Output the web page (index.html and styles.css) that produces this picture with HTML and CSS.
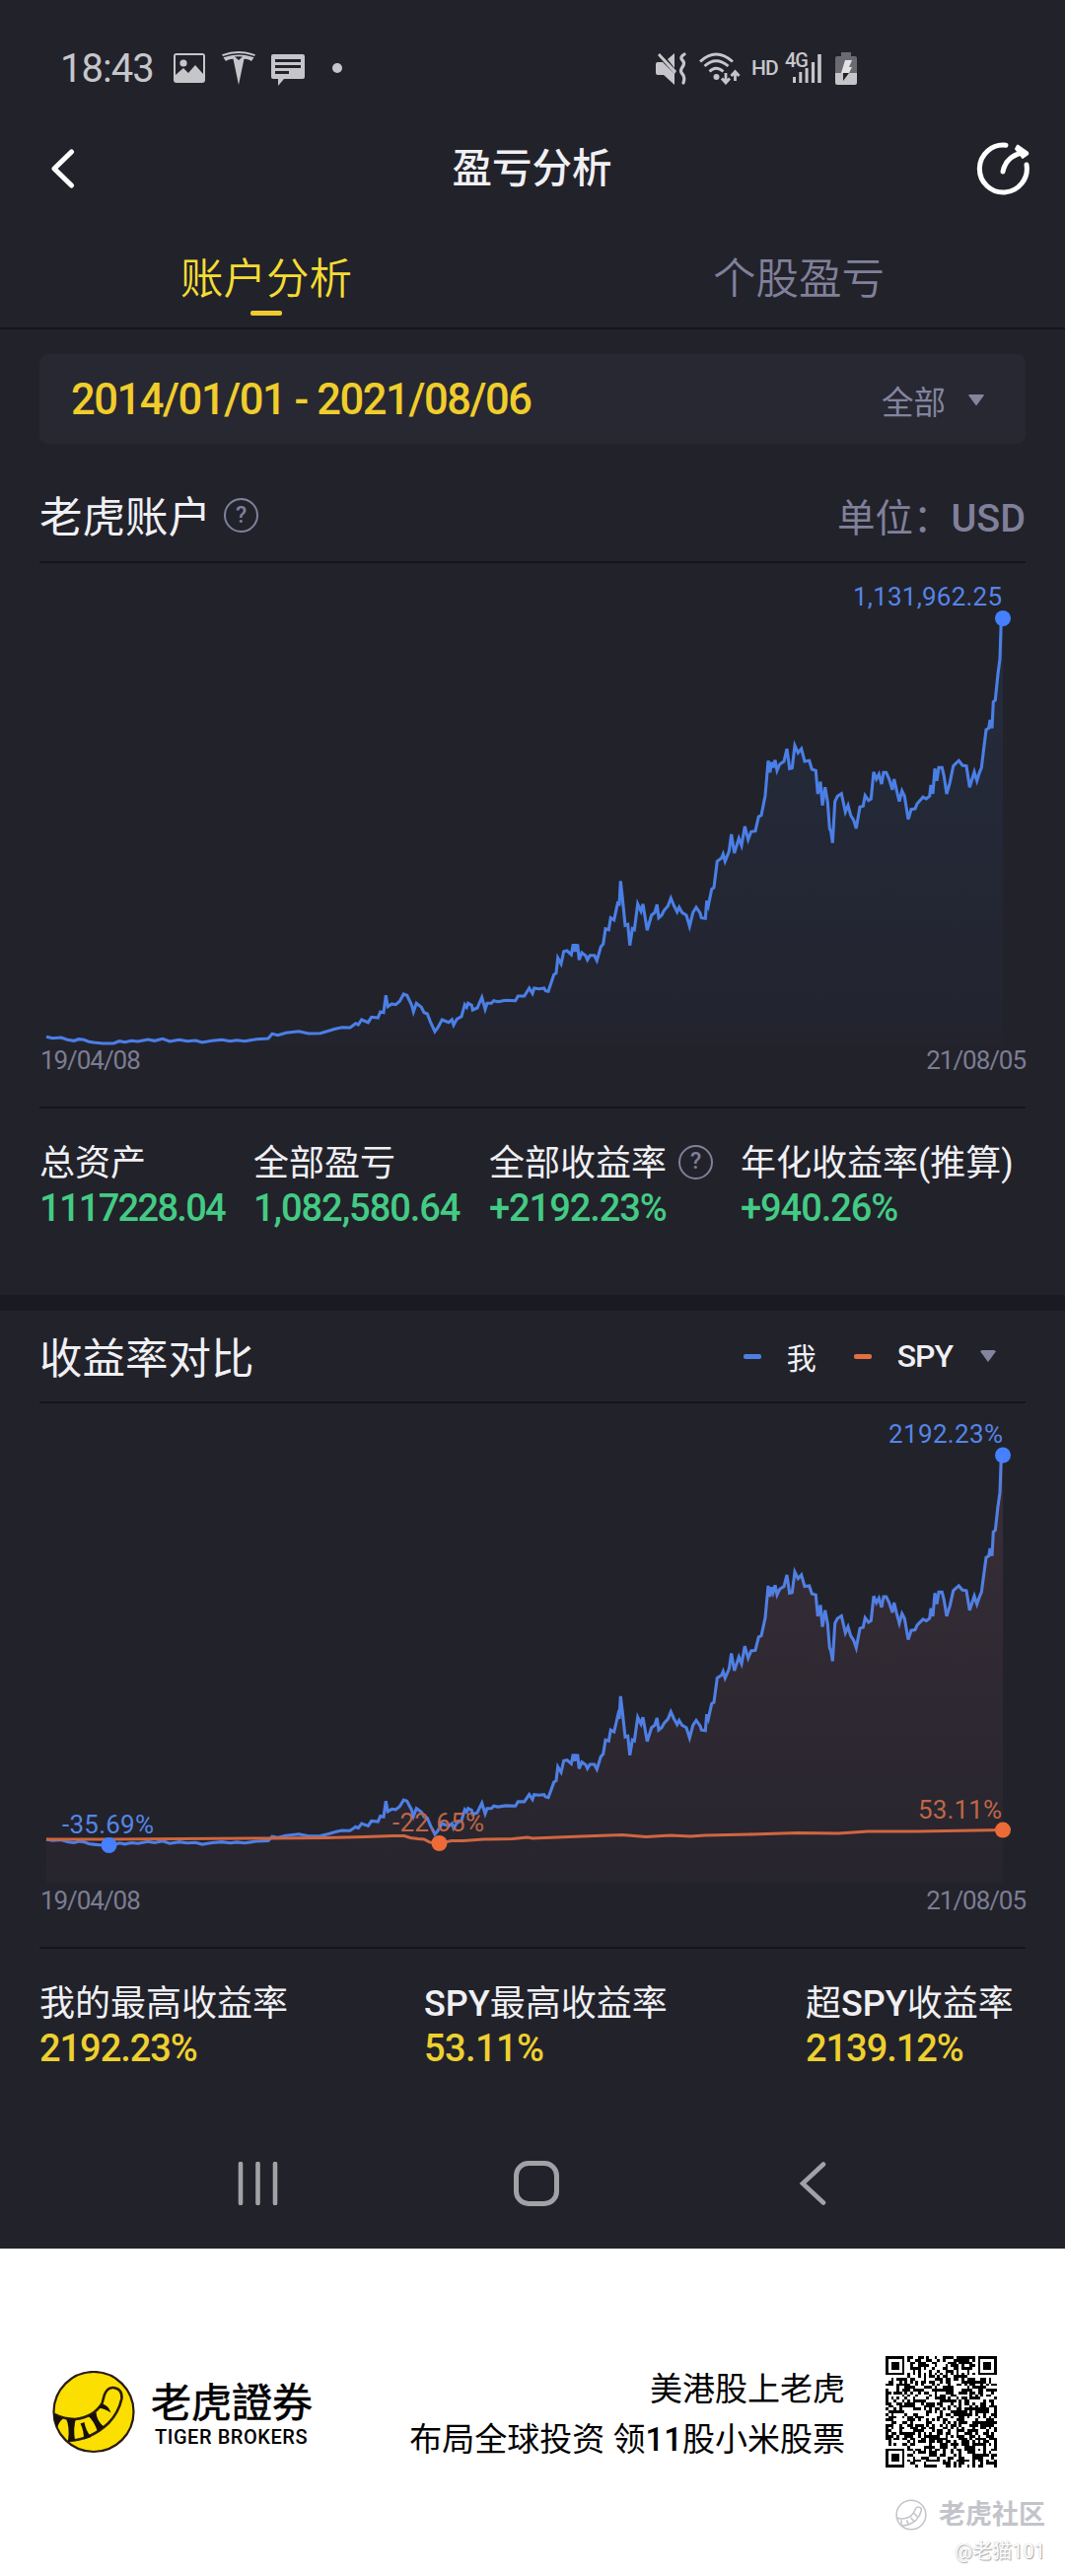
FILE: index.html
```html
<!DOCTYPE html>
<html lang="zh-CN">
<head>
<meta charset="utf-8">
<title>盈亏分析</title>
<link rel="stylesheet" href="styles.css">
</head>
<body>
<main class="app">
  <div class="status">
    <span class="clock">18:43</span>
    <svg class="ic-photo" width="32" height="30" viewBox="0 0 32 30"><path fill-rule="evenodd" d="M3 0h26q3 0 3 3v24q0 3-3 3H3q-3 0-3-3V3q0-3 3-3zM2 2v20l8-7 5 5 7-8 8 9V2z"/><circle cx="10" cy="10" r="3.6"/></svg>
    <svg class="ic-tesla" width="34" height="34" viewBox="0 0 34 34"><path d="M0 3.2Q17-3 34 3.2L33 5Q17-.8 1 5zM1.5 6.3Q17 .5 32.5 6.3L30 10q-2-2-7.500-2.300L17 34 11.500 7.700Q6 8 4 10zM13 5.600l4 3.400 4-3.400q-4-.6-8 0z" fill-rule="evenodd"/></svg>
    <svg class="ic-msg" width="34" height="32" viewBox="0 0 34 32"><path fill-rule="evenodd" d="M2 0h30q2 0 2 2v21q0 2-2 2H13l-6 7V25H2q-2 0-2-2V2q0-2 2-2zM4 5v3h26V5zM4 11v3h26v-3zM4 17v3h14v-3z"/></svg>
    <span class="more-dot"></span>
    <svg class="ic-mute" width="32" height="33" viewBox="0 0 32 33"><path d="M2 10h5L19 22v11L8 23H2q-2 0-2-2v-9q0-2 2-2zM12 7l7-6v15zM2 3l2-2 17 18-2 3z"/><path d="M29 2q-5 3-2 6t0 7 0 7 1 9" fill="none" stroke="#c6c6ca" stroke-width="3.200" stroke-linecap="round"/></svg>
    <svg class="ic-wifi" width="42" height="33" viewBox="0 0 42 33"><g fill="none" stroke="#c6c6ca" stroke-width="2.800"><path d="M1 9.500Q17-5.500 34 9.500M5.500 14Q17 3.500 29.500 14M10.500 19.500q6.500-6.500 14 0"/><path d="M27 21v9M23 26.500l4 4.500 4-4.500M36.500 29v-9M32.500 24l4-4.500 4 4.500"/></g><circle cx="17.500" cy="25" r="3"/></svg>
    <span class="hd">HD</span>
    <span class="net"><span class="gen">4G</span><svg class="bars" width="29" height="29" viewBox="0 0 29 29"><path d="M0 23h3v6H0zM6.300 18h3v11h-3zM12.600 14h3v15h-3zM18.900 8h3.200v21h-3.200zM25.200 0h3.600v29h-3.600z"/></svg></span>
    <svg class="ic-bat" width="22" height="33" viewBox="0 0 22 33"><path d="M6 0h10v4h4q2 0 2 2v15H0V6q0-2 2-2h4z" fill="#6a6a70"/><path d="M0 21h22v10q0 2-2 2H2q-2 0-2-2z"/><path d="M10 8h7l-3 7h3l-3 6H6z" fill="#e2e2e4"/><path d="M8 21h6L8 29z" fill="#22222b"/></svg>
  </div>

  <header class="header">
    <svg class="back" width="28" height="44" viewBox="0 0 28 44"><path d="M22.500 5 5 22l17.500 17" fill="none" stroke="#fff" stroke-width="5.200" stroke-linecap="round" stroke-linejoin="round"/></svg>
    <h1>盈亏分析</h1>
    <svg class="share" width="56" height="56" viewBox="0 0 56 56"><g fill="none" stroke="#fff" stroke-width="5" stroke-linecap="round" stroke-linejoin="round"><path d="M31 4.200A24 24 0 1 0 52 24"/><path d="M28 31q3-15 19-19"/></g><path d="M43 4.500 53 11.500q.8 1 0 2l-5 3.500-7-9z" fill="#fff" stroke="#fff" stroke-width="2" stroke-linejoin="round"/></svg>
  </header>

  <nav class="tabs">
    <span class="tab active">账户分析</span>
    <span class="tab">个股盈亏</span>
  </nav>

  <section class="panel account">
    <div class="range">
      <span class="range-dates">2014/01/01 - 2021/08/06</span>
      <span class="range-all">全部</span>
      <i class="caret"></i>
    </div>
    <div class="title-row">
      <h2>老虎账户</h2>
      <span class="help">?</span>
      <span class="unit">单位：<b>USD</b></span>
    </div>
    <svg class="chart" id="assets" width="1080" height="489" viewBox="0 571 1080 489">
      <defs><linearGradient id="blueFill" gradientUnits="userSpaceOnUse" x1="0" y1="627" x2="0" y2="1059"><stop offset="0" stop-color="#3a80d8" stop-opacity=".11"/><stop offset="1" stop-color="#3a80d8" stop-opacity=".015"/></linearGradient></defs>
      <path class="line-blue" data-line></path>
      <path fill="url(#blueFill)" data-area></path>
      <circle class="dot-blue" cx="1017" cy="627" r="8"/>
      <text class="t-blue" x="865" y="614" textLength="151">1,131,962.25</text>
    </svg>
    <div class="axis"><span>19/04/08</span><span>21/08/05</span></div>
    <div class="stats">
      <div class="stat s1"><span class="label">总资产</span><span class="value">1117228.04</span></div>
      <div class="stat s2"><span class="label">全部盈亏</span><span class="value">1,082,580.64</span></div>
      <div class="stat s3"><span class="label">全部收益率<span class="help">?</span></span><span class="value">+2192.23%</span></div>
      <div class="stat s4"><span class="label">年化收益率(推算)</span><span class="value">+940.26%</span></div>
    </div>
  </section>

  <section class="panel compare">
    <div class="title-row">
      <h2>收益率对比</h2>
      <div class="legend">
        <i class="dash blue"></i><span class="me">我</span>
        <i class="dash orange"></i><span class="spy">SPY</span>
        <i class="caret"></i>
      </div>
    </div>
    <svg class="chart" id="returns" width="1080" height="488" viewBox="0 1423 1080 488">
      <defs><linearGradient id="warmFill" gradientUnits="userSpaceOnUse" x1="0" y1="1475" x2="0" y2="1910"><stop offset="0" stop-color="#d8828e" stop-opacity=".125"/><stop offset="1" stop-color="#d8828e" stop-opacity=".025"/></linearGradient></defs>
      <path class="line-blue" data-line></path>
      <path class="line-orange" d="M47 1865H110L273 1864 330 1863.500 370 1862.500 398 1861.500 410 1861.500 416 1863.500 424 1864.500 430 1865 436 1868 445 1869 458 1866.500 470 1866.500 490 1865 520 1864.500 535 1863 540 1864 590 1862 631 1860.500 655 1862.500 680 1861 700 1862 715 1861 760 1860 808 1858.500 850 1859 880 1857 930 1857 1017 1855.600"/>
      <circle class="dot-blue" cx="110.500" cy="1871" r="8"/>
      <circle class="dot-orange" cx="445.500" cy="1869" r="8"/>
      <circle class="dot-blue" cx="1017" cy="1475.500" r="8"/>
      <circle class="dot-orange" cx="1017" cy="1855.600" r="8"/>
      <path fill="url(#warmFill)" data-area></path>
      <text class="t-blue" x="901" y="1463" textLength="116">2192.23%</text>
      <text class="t-blue" x="63" y="1858.500" textLength="93">-35.69%</text>
      <text class="t-orange" x="398" y="1856.500" textLength="93">-22.65%</text>
      <text class="t-orange" x="931" y="1843.500" textLength="85">53.11%</text>
    </svg>
    <div class="axis"><span>19/04/08</span><span>21/08/05</span></div>
    <div class="stats gold">
      <div class="stat g1"><span class="label">我的最高收益率</span><span class="value">2192.23%</span></div>
      <div class="stat g2"><span class="label"><b>SPY</b>最高收益率</span><span class="value">53.11%</span></div>
      <div class="stat g3"><span class="label">超<b>SPY</b>收益率</span><span class="value">2139.12%</span></div>
    </div>
  </section>

  <div class="navbar">
    <svg width="42" height="44" viewBox="0 0 42 44"><path d="M3 2v40M20.500 2v40M38 2v40" stroke="#a2a2a6" stroke-width="4.600" stroke-linecap="round"/></svg>
    <svg class="home" width="48" height="48" viewBox="0 0 48 48"><rect x="3.500" y="3.500" width="41" height="41" rx="12.500" fill="none" stroke="#a2a2a6" stroke-width="5"/></svg>
    <svg width="28" height="44" viewBox="0 0 28 44"><path d="M25 2.500 4 22l21 19.500" fill="none" stroke="#a2a2a6" stroke-width="4.600" stroke-linecap="round"/></svg>
  </div>
</main>

<footer class="footer">
  <svg class="logo" width="84" height="84" viewBox="0 0 84 84">
    <circle cx="42" cy="41.500" r="40.500" fill="#fbdf00" stroke="#2a1c10" stroke-width="2.200"/>
    <path d="M2 44Q12 49 23 49 42 47 50.500 33L53 24Q56 16.500 62 17 71 18 70.500 28 67 43 57 53 39 70 16 71" fill="none" stroke="#2a1c10" stroke-width="2.600"/>
    <path d="M1.500 44 11 48.500Q7 51 5 58 2 52 1.500 44zM14 48.500h10Q21 58 23 70.500L16 71Q18 57 14 48.500zM28.500 53.500 32.500 52Q34 61 39.500 67L32 69.500Q32 60 28.500 53.500zM36 45.500 44.500 42Q45 51 52.500 56.500L46 61.500Q42 50 36 45.500zM47 37.500 51 33.500Q57 35 59.500 42.500 54 38.500 47 37.500z" fill="#17100a"/>
  </svg>
  <div class="brand"><span class="brand-cn">老虎證券</span><span class="brand-en">TIGER BROKERS</span></div>
  <div class="slogan"><span>美港股上老虎</span><span>布局全球投资 领<b>11</b>股小米股票</span></div>
  <svg class="qr" width="113" height="113" viewBox="0 0 41 41" shape-rendering="crispEdges"><path id="qr-cells"/></svg>
  <div class="watermark">
    <div class="wm-name">
      <svg width="32" height="32" viewBox="0 0 84 84" fill="none" stroke="#c3c4ca" stroke-width="4"><circle cx="42" cy="42" r="39"/><path d="M2 50Q12 53 23 52 42 50 50 34L53 27Q56 20 62 21 70 22 69 31 65 46 55 56 39 70 16 71M16 56v14M30 56l5 12M41 49l8 10M50 38l9 9"/></svg>
      <span>老虎社区</span>
    </div>
    <span class="wm-user">@老猫101</span>
  </div>
</footer>
<script src="app.js"></script>
</body>
</html>
```
FILE: styles.css
```css
* { box-sizing: border-box; }
body {
  margin: 0;
  width: 1080px;
  background: #fff;
  font-family: Roboto, "Noto Sans CJK SC", sans-serif;
  font-variant-ligatures: none;
}
h1, h2 { margin: 0; font-weight: 400; }
b { font-weight: 500; }
span { white-space: nowrap; }
svg { display: block; flex: none; }

.app { height: 2280px; background: #22222b; color: #f0f0f3; }

/* system status bar */
.status { display: flex; align-items: center; height: 138px; padding-left: 61px; color: #c6c6ca; fill: #c6c6ca; }
.clock { font-size: 40px; width: 115px; letter-spacing: -1px; }
.ic-tesla { margin-left: 17px; }
.ic-msg { margin: 3px 0 0 16px; }
.more-dot { width: 10px; height: 10px; border-radius: 50%; background: #c6c6ca; margin-left: 28px; }
.ic-mute { margin-left: 318px; }
.ic-wifi { margin-left: 12px; }
.hd { font-size: 21px; font-weight: 500; margin-left: 11px; width: 34px; letter-spacing: -1px; }
.net { display: block; position: relative; width: 38px; height: 32px; }
.gen { position: absolute; left: 0; top: -2px; font-size: 20px; line-height: 20px; font-weight: 500; letter-spacing: -1px; }
.bars { position: absolute; left: 8px; top: 2px; }
.ic-bat { margin-left: 13px; }

.header { display: flex; align-items: center; justify-content: space-between; height: 66px; padding: 0 35px 0 50px; }
h1 { font-size: 40.500px; font-weight: 500; line-height: 60px; }
.back { margin-right: 12px; }

.tabs { display: flex; height: 130px; border-bottom: 2px solid #15151e; }
.tab { flex: 1; display: flex; flex-direction: column; align-items: center; padding-top: 48px; font-size: 43.500px; line-height: 64px; color: #80809a; font-weight: 350; }
.tab.active { color: #f4dc33; }
.tab.active::after { content: ""; width: 32px; height: 5px; margin-top: -1px; border-radius: 2px; background: #eecb2e; }

.account { padding-top: 25px; height: 979px; }
.range { display: flex; align-items: center; height: 91px; margin: 0 40px; padding: 2px 42px 0 32px; border-radius: 9px; background: #272831; }
.range-dates { font-size: 43.500px; font-weight: 500; color: #f0cd2c; letter-spacing: -1.450px; margin-right: auto; }
.range-all { font-size: 32.500px; color: #8384a0; }
.caret { width: 16px; height: 12px; margin-left: 23px; background: #8384a0; clip-path: polygon(0 10%, 12% 0, 88% 0, 100% 10%, 50% 100%); }

.title-row { display: flex; align-items: center; height: 121px; margin: 0 40px; padding-top: 32px; border-bottom: 2px solid #15151e; }
h2 { font-size: 43.500px; line-height: 60px; }
.help { display: inline-flex; align-items: center; justify-content: center; width: 35px; height: 35px; border: 2.500px solid #80809a; border-radius: 50%; color: #80809a; font-size: 23px; line-height: 30px; font-weight: 500; }
.title-row .help { margin: -6px 0 0 13px; }
.unit { margin: -8px 0 0 auto; font-size: 38.500px; color: #80809a; }
.unit b { font-size: 39.500px; }

.chart { font-family: Roboto, sans-serif; font-size: 26px; }
.line-blue { fill: none; stroke: #4b7fe6; stroke-width: 3.100; stroke-linejoin: miter; }
.line-orange { fill: none; stroke: #d0653c; stroke-width: 3; }
.dot-blue { fill: #4480ff; }
.dot-orange { fill: #ee6a35; }
.t-blue { fill: #5585e6; }
.t-orange { fill: #bf6647; }

.axis { display: flex; justify-content: space-between; height: 64px; margin: 0 40px; padding: 0 0 0 1px; border-bottom: 2px solid #15151e; font-size: 26px; line-height: 30px; color: #7c7d92; letter-spacing: -1.050px; }

.stats { display: flex; padding: 38px 0 0 40px; }
.stat { display: flex; flex-direction: column; }
.label { display: flex; align-items: center; font-size: 36px; line-height: 36px; height: 36px; }
.value { font-size: 38px; line-height: 38px; height: 38px; margin-top: 8px; font-weight: 500; color: #43cb84; letter-spacing: -1.050px; }
.s1 .value { letter-spacing: -1.700px; }
.label .help { margin: -4px 0 0 12px; }
.s1 { width: 217px; }
.s2 { width: 239px; }
.s3 { width: 255px; }
.gold .value { color: #edd02f; }
.g1 { width: 390px; }
.g2 { width: 387px; }
.g2 .value { letter-spacing: -.6px; }

.compare { border-top: 16px solid #1a1a23; height: 834px; }
.compare .title-row { height: 94px; padding-top: 0; }
.compare h2 { padding-top: 7px; }
.legend { display: flex; align-items: center; margin-left: auto; padding-right: 30px; }
.dash { width: 18px; height: 5px; border-radius: 2px; }
.dash.blue { background: #4d80e0; }
.dash.orange { background: #e0703f; }
.me { font-size: 30px; margin: 0 38px 0 26px; }
.spy { font-size: 32px; font-weight: 500; margin-left: 26px; letter-spacing: -1px; }
.legend .caret { margin-left: 28px; }
.compare .axis { height: 65px; line-height: 32px; }

.navbar { display: flex; height: 133px; padding: 0 242px 0 241px; justify-content: space-between; align-items: center; }
.home { margin-right: 6px; }

/* share banner */
.footer { position: relative; display: flex; height: 332px; padding-left: 53px; color: #000; }
.logo { margin-top: 124px; }
.brand { display: flex; flex-direction: column; width: 166px; margin: 131px 0 0 16px; }
.brand-cn { font: 400 41px/44px "Noto Sans CJK TC", sans-serif; -webkit-text-stroke: .6px #000; }
.brand-en { font-size: 20px; line-height: 24px; font-weight: 500; margin: 4px 0 0 4px; letter-spacing: .55px; }
.slogan { display: flex; flex-direction: column; align-items: flex-end; width: 538px; margin-top: 117px; font-size: 33px; line-height: 51px; }
.qr { margin: 109px 0 0 41px; }
.watermark { position: absolute; right: 20px; top: 252px; display: flex; flex-direction: column; align-items: flex-end; color: #c3c4ca; }
.wm-name { display: flex; gap: 12px; align-items: center; font-size: 27px; line-height: 36px; font-weight: 700; }
.wm-user { font-size: 20px; line-height: 26px; margin-top: 6px; color: #fff; text-shadow: 1px 1px 1px #a4a4aa, 0 0 1px #b4b4b8; }
```
FILE: app.js
```js
// Equity curve samples, in thirds of a pixel, measured from y = 560.
const curve = `
141,1474 160,1478 186,1476 205,1483 225,1486 240,1481 255,1483 270,1489 285,1491 312,1494 345,1494 363,1487 380,1490 400,1486 420,1488 450,1482
470,1486 495,1480 516,1488 545,1483 570,1487 595,1485 615,1491 645,1486 675,1483 700,1487 720,1484 745,1487 780,1481 816,1479 828,1465
845,1469 870,1462 909,1457 939,1464 975,1463 1000,1456 1020,1450 1040,1445 1065,1446 1082,1433 1090,1437 1100,1422 1120,1430 1130,1414 1150,1416
1157,1398 1167,1400 1174,1348 1180,1382 1192,1374 1204,1376 1216,1366 1228,1344 1238,1348 1252,1376 1258,1398 1267,1372 1282,1384 1290,1400
1300,1404 1310,1430 1323,1458 1332,1446 1345,1422 1365,1430 1375,1422 1380,1438 1390,1420 1404,1412 1414,1376 1420,1384 1424,1372 1435,1378
1438,1392 1452,1386 1466,1354 1476,1390 1482,1372 1495,1372 1502,1364 1515,1367 1540,1363 1568,1364 1576,1350 1595,1350 1610,1326 1620,1342
1625,1326 1640,1328 1655,1326 1660,1334 1668,1336 1685,1285 1692,1280 1697,1234 1707,1252 1715,1214 1725,1212 1738,1224 1744,1192 1747,1215
1751,1192 1754,1215 1757,1192 1762,1240 1770,1218 1782,1228 1787,1240 1795,1226 1808,1226 1816,1242 1828,1200 1835,1192 1842,1145 1852,1148
1858,1112 1868,1118 1880,1062 1884,1075 1888,1000 1893,1045 1902,1135 1910,1132 1916,1196 1924,1145 1930,1148 1940,1070 1950,1092 1956,1070
1969,1150 1982,1104 1992,1096 1999,1072 2004,1112 2013,1104 2020,1090 2032,1076 2041,1052 2050,1074 2060,1094 2066,1080 2075,1096 2088,1104
2098,1138 2108,1096 2118,1080 2130,1098 2134,1112 2146,1114 2150,1060 2155,1075 2165,1025 2172,1020 2182,940 2195,930 2200,918 2206,940
2218,910 2225,858 2234,915 2248,870 2256,892 2266,834 2276,874 2285,850 2298,848 2308,804 2316,800 2328,740 2337,634 2342,670 2348,638
2352,655 2358,632 2364,664 2372,645 2385,636 2394,598 2402,658 2410,656 2418,588 2428,610 2438,598 2448,636 2462,634 2470,660 2482,664
2488,735 2496,698 2502,770 2510,715 2518,760 2524,840 2528,850 2533,884 2540,758 2548,742 2560,734 2572,790 2580,770 2588,800 2597,815
2605,840 2616,775 2626,772 2632,740 2642,755 2650,750 2658,668 2666,690 2674,675 2682,705 2688,670 2696,670 2705,690 2715,722 2720,690
2728,725 2736,758 2744,726 2752,742 2763,812 2772,782 2784,780 2790,765 2808,745 2818,750 2828,742 2832,708 2838,735 2844,658 2850,695
2856,655 2866,655 2872,680 2880,735 2890,700 2900,650 2910,640 2917,634 2928,648 2940,650 2950,715 2964,668 2972,695 2980,670 2986,655
2990,620 3000,540 3008,535 3012,510 3018,535 3022,455 3028,450 3036,370 3042,325 3046,205 3051,201`
  .trim().split(/\s+/).map(p => p.split(',').map(Number));

function draw(id, mapY, bottom) {
  const svg = document.getElementById(id);
  const d = 'M' + curve.map(([x, y]) => (x / 3).toFixed(1) + ' ' + mapY(560 + y / 3).toFixed(1)).join('L');
  svg.querySelector('[data-line]').setAttribute('d', d);
  svg.querySelector('[data-area]').setAttribute('d', d + 'V' + bottom + 'H47Z');
}
draw('assets', y => y, 1059);
draw('returns', y => 1475.5 + (y - 627) * 0.9176, 1909.5);

// QR symbol: 41 x 41 modules.
const N = 41;
const ring = (r, c, cr, cc, half) => {
  const k = Math.max(Math.abs(r - cr), Math.abs(c - cc));
  return k > half ? null : half === 2 ? k !== 1 : half === 4 ? k < 4 && k !== 2 : false;
};
let seed = 20210806;
const rnd = () => (seed = (seed * 1103515245 + 12345) % 2147483648) / 2147483648;
let cells = '';
for (let r = 0; r < N; r++) {
  for (let c = 0; c < N; c++) {
    let on = rnd() < 0.52;
    if (r === 6) on = c % 2 === 0;
    if (c === 6) on = r % 2 === 0;
    for (const [a, b, h] of [[3, 3, 4], [3, 37, 4], [37, 3, 4], [34, 34, 2]]) {
      const v = ring(r, c, a, b, h);
      if (v !== null) on = v;
    }
    if (on) cells += `M${c} ${r}h1v1h-1z`;
  }
}
document.getElementById('qr-cells').setAttribute('d', cells);
```
